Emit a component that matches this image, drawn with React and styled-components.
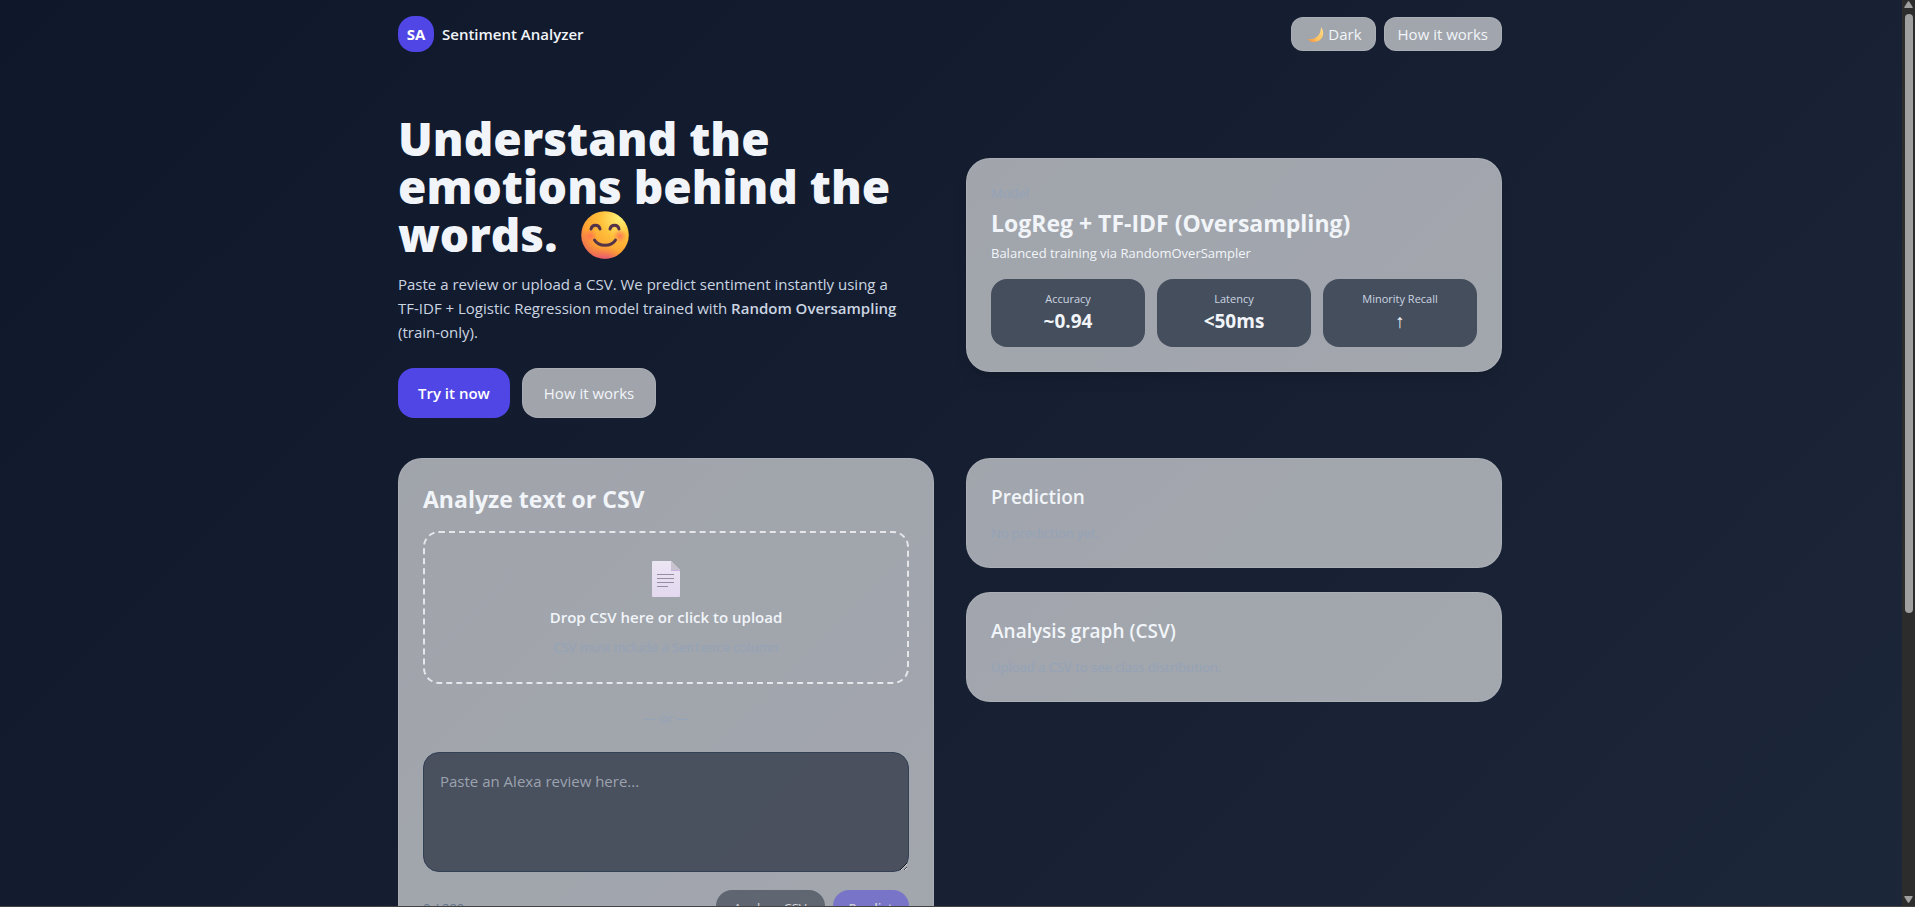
import React, { useRef, useState } from "react";
import styled, { createGlobalStyle, css } from "styled-components";

const MAX_CHARS = 280;

const GlobalStyle = createGlobalStyle`
  *, *::before, *::after { box-sizing: border-box; }
  body { margin: 0; background: #0f172a; }
  h1, h2, h3, p, dl, dt, dd { margin: 0; }
  button, textarea, input { font: inherit; }
`;

const Shell = styled.div`
  display: flex;
  height: 100vh;
  overflow: hidden;
  border-bottom: 1px solid #454344;
  background: #2c2c2c;
  color: #f1f5f9;
  font-family: "Segoe UI", "Open Sans", "Noto Sans", sans-serif;
  font-size: 15px;
  line-height: 24px;
`;

const Pane = styled.div`
  flex: 1;
  min-width: 0;
  overflow-y: auto;
  scrollbar-width: none;
`;

const Page = styled.div`
  min-height: 147vh;
  padding-right: 2px;
  background: linear-gradient(135deg, #0f172a, #1e293b);
`;

const Container = styled.div`
  max-width: 1152px;
  margin: 0 auto;
  padding: 0 24px 40px;
`;

const Header = styled.header`
  display: flex;
  align-items: center;
  justify-content: space-between;
  padding: 16px 0 20px;
`;

const Brand = styled.div`
  display: flex;
  align-items: center;
  gap: 8px;
  font-weight: 600;
`;

const Logo = styled.span`
  display: grid;
  place-items: center;
  width: 36px;
  height: 36px;
  border-radius: 16px;
  background: #4f46e5;
  color: #fff;
  font-weight: 700;
`;

const Row = styled.div`
  display: flex;
  align-items: center;
  gap: ${(p) => p.$gap || 8}px;
  margin-top: ${(p) => p.$top || 0}px;
`;

const glass = css`
  border: 1px solid rgba(255, 255, 255, 0.1);
  background: rgba(255, 255, 255, 0.6);
`;

const NavButton = styled.button`
  ${glass}
  display: flex;
  align-items: center;
  gap: 4px;
  height: 34px;
  padding: 0 13px;
  border-radius: 12px;
  color: #f1f5f9;
  cursor: pointer;
`;

const HeroButton = styled.button`
  height: 50px;
  padding: 0 20px;
  border: 0;
  border-radius: 16px;
  background: #4f46e5;
  color: #fff;
  font-weight: 600;
  cursor: pointer;
`;

const HeroLink = styled.a`
  ${glass}
  display: flex;
  align-items: center;
  height: 50px;
  padding: 0 21px;
  border-radius: 16px;
  color: #f1f5f9;
  text-decoration: none;
`;

const Columns = styled.div`
  display: grid;
  grid-template-columns: repeat(2, minmax(0, 1fr));
  gap: 32px;
  align-items: ${(p) => p.$align || "start"};
  padding-top: 40px;
  @media (max-width: 900px) {
    grid-template-columns: minmax(0, 1fr);
  }
`;

const Headline = styled.h1`
  padding-top: 2px;
  font-size: 46px;
  line-height: 48px;
  font-weight: 800;
`;

const Lead = styled.p`
  margin-top: 14px;
  padding-right: 28px;
  color: #cbd5e1;
  strong { font-weight: 600; }
`;

const Card = styled.section`
  ${glass}
  padding: 24px;
  border-radius: 24px;
  box-shadow: ${(p) => (p.$raised ? "0 10px 15px -3px rgba(0,0,0,.1), 0 4px 6px -4px rgba(0,0,0,.1)" : "none")};
`;

const Stack = styled.div`
  display: grid;
  gap: 24px;
`;

const Title = styled.h2`
  font-size: 23px;
  line-height: 32px;
  font-weight: 700;
`;

const SubTitle = styled.h3`
  margin-bottom: 12px;
  font-size: 19px;
  line-height: 28px;
  font-weight: 600;
`;

const Small = styled.p`
  font-size: 13px;
  line-height: 20px;
  color: ${(p) => (p.$bright ? "#f1f5f9" : "#94a3b8")};
  code { font-family: "DejaVu Sans Mono", monospace; font-size: 12px; }
`;

const ModelHead = styled.div`
  display: grid;
  gap: 4px;
`;

const Metrics = styled.dl`
  display: grid;
  grid-template-columns: repeat(3, 1fr);
  gap: 12px;
  margin-top: 16px;
`;

const Metric = styled.div`
  padding: 12px;
  border-radius: 16px;
  background: rgba(30, 41, 59, 0.7);
  text-align: center;
  dt { font-size: 11px; line-height: 16px; color: #cbd5e1; }
  dd { font-size: 19px; line-height: 28px; font-weight: 700; }
`;

const DropZone = styled.label`
  display: flex;
  flex-direction: column;
  align-items: center;
  gap: 8px;
  margin-top: 16px;
  padding: 24px;
  border: 2px dashed #e5e7eb;
  border-radius: 16px;
  cursor: pointer;
  strong { font-weight: 600; }
`;

const HiddenFile = styled.input`
  position: absolute;
  width: 1px;
  height: 1px;
  opacity: 0;
`;

const Divider = styled(Small)`
  margin: 24px 0;
  text-align: center;
`;

const Review = styled.textarea`
  display: block;
  width: 100%;
  height: 120px;
  padding: 16px;
  border: 1px solid #334155;
  border-radius: 16px;
  background: rgba(15, 23, 42, 0.6);
  color: #f1f5f9;
  &::placeholder { color: #9ca3af; }
`;

const Footer = styled.div`
  display: flex;
  align-items: center;
  justify-content: space-between;
  margin-top: 18px;
`;

const Count = styled.span`
  font-size: 13px;
  line-height: 20px;
  color: #64748b;
`;

const ActionButton = styled.button`
  height: 36px;
  padding: 0 ${(p) => (p.$primary ? 16 : 18)}px;
  border: 0;
  border-radius: 16px;
  background: ${(p) => (p.$primary ? "#4f46e5" : "#1f2937")};
  color: #fff;
  font-size: 13px;
  font-weight: ${(p) => (p.$primary ? 600 : 400)};
  &:disabled { opacity: 0.5; }
`;

const Track = styled.div`
  display: flex;
  flex-direction: column;
  align-items: center;
  width: 13px;
  padding: 1px 0 3px;
  background: #2c2c2c;
`;

const Thumb = styled.div`
  width: 8px;
  height: 66vh;
  margin: 6px 0 auto;
  border-radius: 4px;
  background: #9f9f9f;
`;

const Smile = styled.svg`
  width: 48px;
  height: 48px;
  margin: 0 0 -4px 12px;
  vertical-align: -3px;
`;

function SmileIcon() {
  return (
    <Smile viewBox="0 0 48 48" role="img" aria-label="Smiling face">
      <defs>
        <radialGradient id="face" cx="0.8" cy="0.14" r="0.95">
          <stop offset="0" stopColor="#fff176" />
          <stop offset="0.42" stopColor="#ffc03b" />
          <stop offset="0.78" stopColor="#fda232" />
          <stop offset="1" stopColor="#ee7150" />
        </radialGradient>
        <radialGradient id="chin" cx="0.5" cy="1.12" r="0.4">
          <stop offset="0" stopColor="#d83f9a" />
          <stop offset="1" stopColor="#f2675a" stopOpacity="0" />
        </radialGradient>
        <radialGradient id="blush">
          <stop offset="0" stopColor="#ff6258" stopOpacity="0.75" />
          <stop offset="1" stopColor="#ff6f55" stopOpacity="0" />
        </radialGradient>
      </defs>
      <circle cx="24" cy="24" r="23.8" fill="url(#face)" />
      <circle cx="24" cy="24" r="23.8" fill="url(#chin)" />
      <circle cx="9" cy="25" r="7" fill="url(#blush)" />
      <circle cx="39" cy="25" r="7" fill="url(#blush)" />
      <g fill="none" stroke="#553449" strokeWidth="3" strokeLinecap="round">
        <path d="M10 18c1-5 8-5 9 0" />
        <path d="M29 18c1-5 8-5 9 0" />
        <path d="M13.500 29c4 7 17 7 21 0" />
      </g>
    </Smile>
  );
}

function MoonIcon() {
  return (
    <svg width="19" height="18" viewBox="1 0 19 18" aria-hidden="true">
      <defs>
        <linearGradient id="moon" x1="1" y1="0" x2="0" y2="1">
          <stop offset="0" stopColor="#ffe08a" />
          <stop offset="0.6" stopColor="#fdc25f" />
          <stop offset="1" stopColor="#f58b3c" />
        </linearGradient>
      </defs>
      <path d="M17 2c5 6 1 15-7 15-3 0-5-1-6-3 8 1 13-4 13-12z" fill="url(#moon)" />
    </svg>
  );
}

function DocumentIcon() {
  return (
    <svg width="28" height="40" viewBox="0 0 28 40" aria-hidden="true">
      <defs>
        <linearGradient id="paper" x1="0" y1="0" x2="0" y2="1">
          <stop offset="0" stopColor="#ece5f3" />
          <stop offset="1" stopColor="#e3d8ef" />
        </linearGradient>
      </defs>
      <path d="M1 4h18l9 9v26a1 1 0 0 1-1 1H1a1 1 0 0 1-1-1V5a1 1 0 0 1 1-1z" fill="url(#paper)" />
      <path d="M19 4l9 9h-8a1 1 0 0 1-1-1z" fill="#c9c3d0" />
      <path d="M19 12a1 1 0 0 0 1 1h8v1h-9z" fill="#c8b2df" />
      <path d="M5 17.500h17M5 21.500h17M5 25.500h17M5 29.500h11" stroke="#958da2" strokeWidth="1.200" />
    </svg>
  );
}

function ScrollArrow({ down }) {
  return (
    <svg width="9" height="7" viewBox="0 0 9 7" aria-hidden="true">
      <path d={down ? "M1 0h7q1 0 .6 1L5.200 6.400q-.7.900-1.400 0L.4 1Q0 0 1 0z" : "M1 7h7q1 0 .6-1L5.200.6q-.7-.900-1.400 0L.4 6Q0 7 1 7z"} fill="#9f9f9f" />
    </svg>
  );
}

const METRICS = [
  ["Accuracy", "~0.94"],
  ["Latency", "<50ms"],
  ["Minority Recall", "↑"],
];

export default function App() {
  const [text, setText] = useState("");
  const [file, setFile] = useState(null);
  const review = useRef(null);

  return (
    <Shell>
      <GlobalStyle />
      <Pane>
        <Page>
          <Container>
            <Header>
              <Brand>
                <Logo>SA</Logo>
                Sentiment Analyzer
              </Brand>
              <Row>
                <NavButton type="button"><MoonIcon />Dark</NavButton>
                <NavButton type="button">How it works</NavButton>
              </Row>
            </Header>
            <Columns $align="center">
              <div>
                <Headline>
                  Understand the emotions behind the words. <SmileIcon />
                </Headline>
                <Lead>
                  Paste a review or upload a CSV. We predict sentiment instantly using a TF-IDF + Logistic
                  Regression model trained with <strong>Random Oversampling</strong> (train-only).
                </Lead>
                <Row $gap={12} $top={24}>
                  <HeroButton type="button" onClick={() => review.current.focus()}>Try it now</HeroButton>
                  <HeroLink href="#how">How it works</HeroLink>
                </Row>
              </div>
              <Card $raised>
                <ModelHead>
                  <Small>Model</Small>
                  <Title>LogReg + TF-IDF (Oversampling)</Title>
                  <Small $bright>Balanced training via RandomOverSampler</Small>
                </ModelHead>
                <Metrics>
                  {METRICS.map(([label, value]) => (
                    <Metric key={label}>
                      <dt>{label}</dt>
                      <dd>{value}</dd>
                    </Metric>
                  ))}
                </Metrics>
              </Card>
            </Columns>
            <Columns>
              <Card>
                <Title>Analyze text or CSV</Title>
                <DropZone>
                  <HiddenFile type="file" accept=".csv" onChange={(e) => setFile(e.target.files[0])} />
                  <DocumentIcon />
                  <strong>Drop CSV here or click to upload</strong>
                  <Small as="span">CSV must include a <code>Sentence</code> column</Small>
                </DropZone>
                <Divider>— or —</Divider>
                <Review
                  ref={review}
                  aria-label="Review text"
                  placeholder="Paste an Alexa review here..."
                  maxLength={MAX_CHARS}
                  value={text}
                  onChange={(e) => setText(e.target.value)}
                />
                <Footer>
                  <Count>{text.length} / {MAX_CHARS}</Count>
                  <Row>
                    <ActionButton type="button" disabled={!file}>Analyze CSV</ActionButton>
                    <ActionButton type="button" $primary disabled={!text}>Predict</ActionButton>
                  </Row>
                </Footer>
              </Card>
              <Stack>
                <Card>
                  <SubTitle>Prediction</SubTitle>
                  <Small>No prediction yet.</Small>
                </Card>
                <Card>
                  <SubTitle>Analysis graph (CSV)</SubTitle>
                  <Small>Upload a CSV to see class distribution.</Small>
                </Card>
              </Stack>
            </Columns>
          </Container>
        </Page>
      </Pane>
      <Track aria-hidden="true">
        <ScrollArrow />
        <Thumb />
        <ScrollArrow down />
      </Track>
    </Shell>
  );
}
